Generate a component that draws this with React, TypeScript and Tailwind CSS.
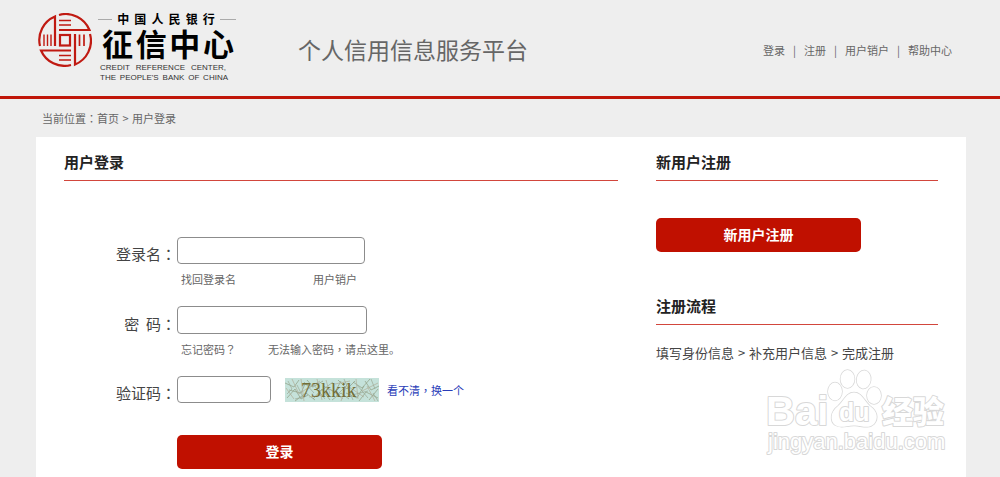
import React from 'react';

const navLinks = [
  { name: '登录', href: '#login' },
  { name: '注册', href: '#register' },
  { name: '用户销户', href: '#cancel' },
  { name: '帮助中心', href: '#help' },
];

// Centered full-width punctuation
const Mark: React.FC<{ children: React.ReactNode }> = ({ children }) => (
  <span className="font-['Noto_Sans_CJK_TC',sans-serif]">{children}</span>
);

const Emblem = () => (
  <svg viewBox="0 0 54 54" className="h-[54px] w-[54px] shrink-0" fill="none" stroke="#c01a12" strokeWidth="2.2" aria-hidden="true">
    <path d="M2 33A25.500 25.500 0 0 1 17 3.500V33" />
    <path d="M6 21.500V33M9.500 21.500V33M13 21.500V33" strokeWidth="1.400" />
    <path d="M21 2A25.500 25.500 0 0 1 51.500 17H21" />
    <path d="M21 7.500H33M21 12H33" strokeWidth="1.700" />
    <path d="M52 21A25.500 25.500 0 0 1 37 51.500V21" />
    <path d="M41.500 21.500V33M46 21.500V33" strokeWidth="1.700" />
    <path d="M33 52A25.500 25.500 0 0 1 3 37.500H33" />
    <path d="M21 42.500H33M21 47H33" strokeWidth="1.700" />
    <rect x="22" y="22" width="10" height="10.500" />
  </svg>
);

const Logo = () => (
  <a href="#home" className="flex items-start gap-1.5 text-black" aria-label="中国人民银行征信中心">
    <Emblem />
    <div className="w-[138px]">
      <div className="flex items-center justify-between text-xs leading-3 font-bold">
        <span className="h-px w-3.5 bg-[#aaa]" />
        {'中国人民银行'.split('').map((char) => (
          <span key={char}>{char}</span>
        ))}
        <span className="h-px w-4 bg-[#aaa]" />
      </div>
      <div className="mt-0.5 flex justify-between pr-0.5 pl-1 text-[31px] leading-8 font-bold">
        {'征信中心'.split('').map((char) => (
          <span key={char}>{char}</span>
        ))}
      </div>
      <div className="mt-1 flex w-32 justify-between pl-0.5 font-['Liberation_Sans',sans-serif] text-[8px] leading-[10px] text-[#333]">
        <span>CREDIT</span>
        <span>REFERENCE</span>
        <span>CENTER,</span>
      </div>
      <div className="flex w-[130px] justify-between pl-0.5 font-['Liberation_Sans',sans-serif] text-[8px] leading-[10px] text-[#333]">
        <span>THE</span>
        <span>PEOPLE'S</span>
        <span>BANK</span>
        <span>OF</span>
        <span>CHINA</span>
      </div>
    </div>
  </a>
);

const SectionTitle: React.FC<{ children: React.ReactNode }> = ({ children }) => (
  <h2 className="border-b border-[#d2463c] pt-[15px] pb-2 text-[15px] leading-5 font-bold text-[#222]">{children}</h2>
);

const Captcha = () => (
  <svg viewBox="0 0 94 24" className="h-6 w-[94px]" role="img" aria-label="验证码图片">
    <rect width="94" height="24" fill="#c5e2da" />
    <g fill="none" strokeWidth="0.7">
      <path
        stroke="#8f9d83"
        d="M0 5l9 4 5-7M2 20l8-9 6 10 7-4M4 12l12 3 4-9 8 3M10 23l11-8 9 7M22 2l6 7 10-6M28 21l9-10 8 11M38 8l12 6 6-11M47 22l9-7 8 6M53 2l9 9 8-8M61 15l11 5 7-12M68 4l9 6 8-9M74 23l7-9 12 6M80 3l6 9 8-4M84 22l9-11"
      />
      <path
        stroke="#b0ae98"
        d="M1 10l8 11M7 1l7 15 10-7M16 1l3 22M21 12l14-9M24 19l15-2M32 1l5 21M41 2l4 14M45 11l13 10M50 6l15-3M56 23l6-17M64 9l15 10M71 1l2 20M77 13l16-8M82 8l8 15"
      />
      <path
        stroke="#9ba995"
        d="M3 3l4 8-5 5M12 7l6 12-8 2M19 4l10 11M29 7l11 14M36 13l12-9M51 18l12-12M59 1l9 21M67 17l16-4M72 7l11 13M86 1l4 10M88 15l5 8"
      />
    </g>
    <text x="16" y="19" fontSize="20" fill="#726e38" fontFamily="Liberation Serif, serif">
      73kkik
    </text>
  </svg>
);

const Watermark = () => (
  <svg viewBox="0 0 190 92" className="pointer-events-none absolute right-4 bottom-5 h-[92px] w-[190px]" aria-hidden="true">
    <g
      fill="#fff"
      stroke="#d8d8d8"
      strokeWidth="2"
      strokeLinejoin="round"
      paintOrder="stroke"
      fontFamily="Liberation Sans, sans-serif"
      fontWeight="bold"
    >
      <text x="6" y="60" fontSize="40">
        Bai
      </text>
      <g strokeWidth="1.5">
        <ellipse cx="75" cy="26.500" rx="7" ry="9" />
        <ellipse cx="87.500" cy="14" rx="7" ry="9" />
        <ellipse cx="103.700" cy="14.500" rx="7" ry="9" transform="rotate(8 103.700 14.500)" />
        <ellipse cx="114" cy="30.500" rx="7" ry="8.500" />
        <path d="M94 27.500C86 27.500 84 36 78 41C70 47 70 56 75 60C81 64 87 60 95 60.500C102 61 109 64 114 59C119 53 117 46 110 41C104 36 102 27.500 94 27.500Z" />
      </g>
      <text x="79" y="55.500" fontSize="25">
        du
      </text>
      <text x="122" y="58" fontSize="31" fontWeight="900" fontFamily="Noto Sans CJK SC, sans-serif">
        经验
      </text>
      <text x="8" y="84" fontSize="22" fontWeight="normal">
        jingyan.baidu.com
      </text>
    </g>
  </svg>
);

const labelClass = 'w-[113px] pr-px text-right text-[15px] leading-5 text-[#444]';
const inputClass = 'rounded border border-[#8c8c8c] bg-white px-2 text-sm outline-none';
const buttonClass = 'block h-[34px] w-[205px] rounded-[5px] bg-[#c01000] pb-0.5 text-sm font-bold text-white';

const LoginForm = () => (
  <form className="pt-14" onSubmit={(e) => e.preventDefault()}>
    <div className="flex items-end">
      <label htmlFor="username" className={labelClass}>
        登录名<Mark>：</Mark>
      </label>
      <input id="username" type="text" className={`${inputClass} h-[27px] w-[188px]`} />
    </div>
    <div className="mt-[5px] ml-[117px] flex w-44 justify-between text-[11px] leading-5 text-[#666]">
      <a href="#find-username">找回登录名</a>
      <a href="#cancel">用户销户</a>
    </div>

    <div className="mt-[17px] flex items-end">
      <label htmlFor="password" className={labelClass}>
        密&nbsp;&nbsp;码<Mark>：</Mark>
      </label>
      <input id="password" type="password" className={`${inputClass} h-7 w-[190px]`} />
    </div>
    <div className="mt-[5px] ml-[117px] flex gap-8 text-[11px] leading-5 text-[#666]">
      <a href="#forgot">
        忘记密码<Mark>？</Mark>
      </a>
      <a href="#password-help">
        无法输入密码<Mark>，</Mark>请点这里。
      </a>
    </div>

    <div className="mt-[17px] flex items-end">
      <label htmlFor="captcha" className={labelClass}>
        验证码<Mark>：</Mark>
      </label>
      <input id="captcha" type="text" className={`${inputClass} h-[27px] w-[94px]`} />
      <div className="flex items-center gap-2 pb-px pl-3.5">
        <Captcha />
        <button type="button" className="text-[11px] leading-5 text-[#2a3db8]">
          看不清<Mark>，</Mark>换一个
        </button>
      </div>
    </div>

    <button type="submit" className={`${buttonClass} mt-8 ml-[113px]`}>
      登录
    </button>
  </form>
);

const App = () => {
  return (
    <div className="flex min-h-screen flex-col bg-[#eee] font-['Noto_Sans_CJK_SC',sans-serif]">
      <header className="flex min-h-[99px] items-center border-b-3 border-[#c01508] pr-12 pl-[38px]">
        <Logo />
        <h1 className="ml-[62px] pt-0.5 text-[23px] leading-8 text-[#666]">个人信用信息服务平台</h1>
        <nav className="ml-auto flex gap-2 pt-1 text-[11px] leading-5 text-[#666]">
          {navLinks.map((link, index) => (
            <React.Fragment key={link.name}>
              {index > 0 && <span>|</span>}
              <a href={link.href}>{link.name}</a>
            </React.Fragment>
          ))}
        </nav>
      </header>

      <div className="px-[42px] py-[9px] text-[11px] leading-5 text-[#666]">
        当前位置<Mark>：</Mark>
        <a href="#home">首页</a> <span className="mx-px">&gt;</span> 用户登录
      </div>

      <main className="relative mr-[34px] ml-9 flex flex-1 gap-[38px] bg-white px-7 pb-2">
        <section className="flex-1">
          <SectionTitle>用户登录</SectionTitle>
          <LoginForm />
        </section>

        <aside className="w-[282px]">
          <SectionTitle>新用户注册</SectionTitle>
          <button type="button" className={`${buttonClass} mt-[37px] mb-[29px]`}>
            新用户注册
          </button>
          <SectionTitle>注册流程</SectionTitle>
          <p className="mt-[18px] text-[13px] leading-5 text-[#444]">
            填写身份信息 <span className="mx-px">&gt;</span> 补充用户信息 <span className="mx-px">&gt;</span> 完成注册
          </p>
        </aside>

        <Watermark />
      </main>
    </div>
  );
};

export default App;
